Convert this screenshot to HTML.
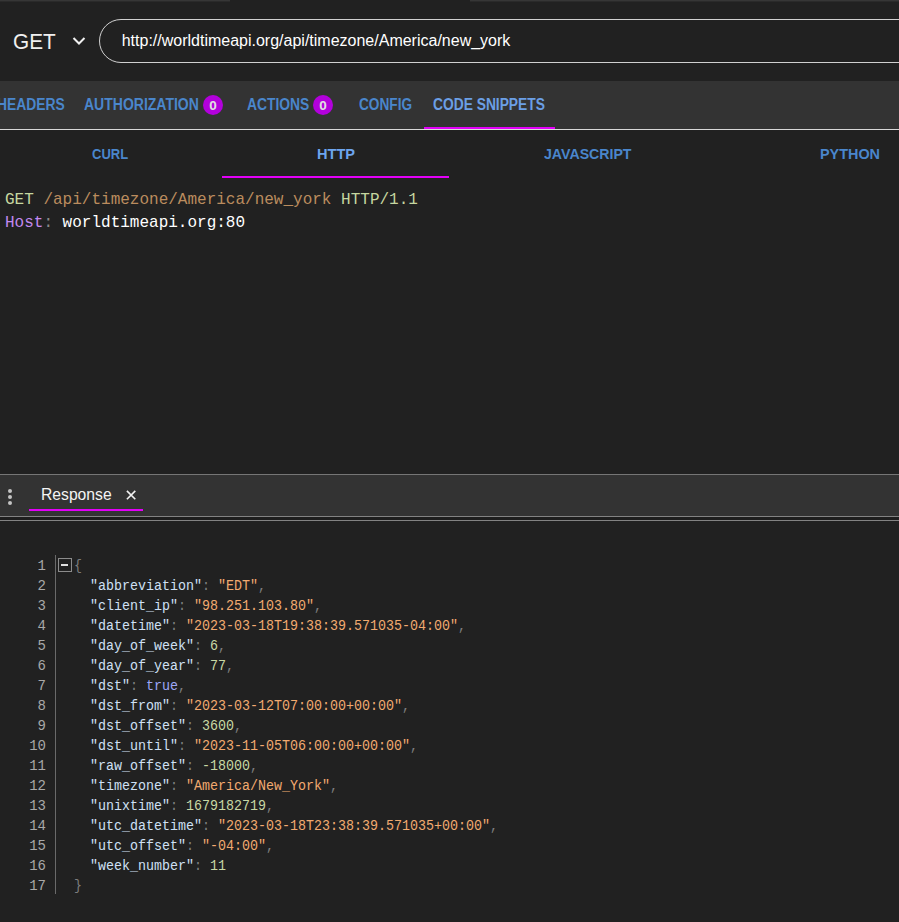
<!DOCTYPE html>
<html><head><meta charset="utf-8">
<style>
html,body{margin:0;padding:0;}
body{width:899px;height:922px;overflow:hidden;background:#212121;position:relative;font-family:"Liberation Sans",sans-serif;}
.abs{position:absolute;white-space:pre;}
#topstrip{left:0;top:0;width:899px;height:2px;background:#333;}
#get{transform-origin:0 0;transform:scaleX(0.91);left:12.5px;top:28px;font-size:22.8px;color:#f0f0f0;line-height:26px;}
#chev{left:71px;top:35px;}
#url{left:98.5px;top:18.8px;width:900px;height:42px;border:1.5px solid #d0d0d0;border-radius:22px;}
#urltext{left:121.7px;top:32px;font-size:16px;color:#fff;line-height:18px;}
#tabbar{left:0;top:81px;width:899px;height:48px;background:#333;}
#tabline{left:0;top:129px;width:899px;height:1px;background:#d8d8d8;}
.tab{transform-origin:0 0;font-size:16px;color:#4a86cc;line-height:16px;top:97px;font-weight:bold;}
.badge{width:20px;height:20px;border-radius:10px;background:#b300dc;color:#e2e2e2;font-size:13.5px;font-weight:bold;text-align:center;line-height:21.6px;top:95px;}
.ul{background:#e200f8;height:2px;}
.sub{transform-origin:0 12.5px;font-size:16px;color:#4a86cc;line-height:16px;top:146px;font-weight:bold;}
.code{font-family:"Liberation Mono",monospace;font-size:17px;line-height:24px;transform-origin:0 0;transform:scaleX(0.9412);}
#resptop{left:0;top:474px;width:899px;height:1px;background:#767676;}
#respbar{left:0;top:475px;width:899px;height:41px;background:#333;}
#respl1{left:0;top:516px;width:899px;height:1px;background:#838383;}
#respgap{left:0;top:517px;width:899px;height:3px;background:#1e1e1e;}
#respl2{left:0;top:520px;width:899px;height:1px;background:#838383;}
.dot{width:4px;height:4px;border-radius:2px;background:#c4c4c4;left:8px;}
#resp{left:41px;top:486.4px;font-size:16px;color:#f4f4f4;line-height:18px;transform-origin:0 0;transform:scaleX(0.98);}
.json{font-family:"Liberation Mono",monospace;font-size:14px;line-height:20px;}
.jx{transform-origin:0 0;transform:scaleX(0.9524);}
.ln{color:#a8a8a8;text-align:right;width:46px;left:0;}
.k{color:#cfe0f5}.s{color:#f2aa70}.n{color:#c8d8a4}.b{color:#9fa8f8}.p{color:#7e7e7e}
</style></head><body>
<div class="abs" style="left:0;top:0;width:230px;height:1px;background:#363636"></div><div class="abs" style="left:0;top:1px;width:230px;height:1px;background:#2a2a2a"></div><div class="abs" style="left:470px;top:0;width:429px;height:1px;background:#363636"></div><div class="abs" style="left:470px;top:1px;width:429px;height:1px;background:#2a2a2a"></div>
<div class="abs" id="get">GET</div>
<svg class="abs" id="chev" width="16" height="12" viewBox="0 0 16 12"><path d="M2.5 3 L8 8.5 L13.5 3" stroke="#f0f0f0" stroke-width="2" fill="none"/></svg>
<div class="abs" id="url"></div>
<div class="abs" id="urltext">http://worldtimeapi.org/api/timezone/America/new_york</div>

<div class="abs" id="tabbar"></div>
<div class="abs" id="tabline"></div>
<div class="abs tab" style="left:-3.4px;transform:scaleX(0.865)">HEADERS</div>
<div class="abs tab" style="left:84px;transform:scaleX(0.875)">AUTHORIZATION</div>
<div class="abs badge" style="left:203px">0</div>
<div class="abs tab" style="left:247px;transform:scaleX(0.865)">ACTIONS</div>
<div class="abs badge" style="left:313px">0</div>
<div class="abs tab" style="left:359px;transform:scaleX(0.853)">CONFIG</div>
<div class="abs tab" style="left:433px;color:#6b9fe6;transform:scaleX(0.862)">CODE SNIPPETS</div>
<div class="abs ul" style="left:424px;top:127px;width:131px;height:2px"></div>

<div class="abs sub" style="left:92px;transform:scale(0.813,0.96)">CURL</div>
<div class="abs sub" style="left:317px;color:#6da5ee;transform:scale(0.91,0.96)">HTTP</div>
<div class="abs sub" style="left:543.6px;transform:scale(0.884,0.96)">JAVASCRIPT</div>
<div class="abs sub" style="left:819.5px;transform:scale(0.90,0.96)">PYTHON</div>
<div class="abs ul" style="left:222px;top:176px;width:227px;height:2px"></div>

<div class="abs code" style="left:5px;top:187.5px"><span style="color:#c6d7a0">GET</span> <span style="color:#bb8c5e">/api/timezone/America/new_york</span> <span style="color:#c6d7a0">HTTP/1.1</span></div>
<div class="abs code" style="left:5px;top:210.7px"><span style="color:#c389f0">Host</span><span style="color:#8a8a8a">:</span> <span style="color:#fff">worldtimeapi.org:80</span></div>

<div class="abs" id="resptop"></div>
<div class="abs" id="respbar"></div>
<div class="abs" id="respl1"></div>
<div class="abs" id="respgap"></div>
<div class="abs" id="respl2"></div>
<div class="abs dot" style="top:489px"></div>
<div class="abs dot" style="top:495px"></div>
<div class="abs dot" style="top:501px"></div>
<div class="abs" id="resp">Response</div>
<svg class="abs" style="left:125px;top:489px" width="12" height="12" viewBox="0 0 12 12"><path d="M1.9 1.9 L10.3 10.3 M10.3 1.9 L1.9 10.3" stroke="#f2f2f2" stroke-width="1.6"/></svg>
<div class="abs ul" style="left:29px;top:509px;width:114px;height:2px"></div>

<div class="abs" style="left:55px;top:555px;width:1px;height:339px;background:#6a6a6a"></div>
<div class="abs" style="left:58px;top:558px;width:12px;height:12px;border:1px solid #8c8c8c;box-sizing:content-box"></div>
<div class="abs" style="left:61px;top:564px;width:7px;height:2px;background:#e0e0e0"></div>

<div class="abs json ln" style="top:556px">1
2
3
4
5
6
7
8
9
10
11
12
13
14
15
16
17</div>
<div class="abs json jx" style="left:74px;top:555.8px"><span class="p">{</span>
  <span class="k">"abbreviation"</span><span class="p">: </span><span class="s">"EDT"</span><span class="p">,</span>
  <span class="k">"client_ip"</span><span class="p">: </span><span class="s">"98.251.103.80"</span><span class="p">,</span>
  <span class="k">"datetime"</span><span class="p">: </span><span class="s">"2023-03-18T19:38:39.571035-04:00"</span><span class="p">,</span>
  <span class="k">"day_of_week"</span><span class="p">: </span><span class="n">6</span><span class="p">,</span>
  <span class="k">"day_of_year"</span><span class="p">: </span><span class="n">77</span><span class="p">,</span>
  <span class="k">"dst"</span><span class="p">: </span><span class="b">true</span><span class="p">,</span>
  <span class="k">"dst_from"</span><span class="p">: </span><span class="s">"2023-03-12T07:00:00+00:00"</span><span class="p">,</span>
  <span class="k">"dst_offset"</span><span class="p">: </span><span class="n">3600</span><span class="p">,</span>
  <span class="k">"dst_until"</span><span class="p">: </span><span class="s">"2023-11-05T06:00:00+00:00"</span><span class="p">,</span>
  <span class="k">"raw_offset"</span><span class="p">: </span><span class="n">-18000</span><span class="p">,</span>
  <span class="k">"timezone"</span><span class="p">: </span><span class="s">"America/New_York"</span><span class="p">,</span>
  <span class="k">"unixtime"</span><span class="p">: </span><span class="n">1679182719</span><span class="p">,</span>
  <span class="k">"utc_datetime"</span><span class="p">: </span><span class="s">"2023-03-18T23:38:39.571035+00:00"</span><span class="p">,</span>
  <span class="k">"utc_offset"</span><span class="p">: </span><span class="s">"-04:00"</span><span class="p">,</span>
  <span class="k">"week_number"</span><span class="p">: </span><span class="n">11</span>
<span class="p">}</span></div>
</body></html>
